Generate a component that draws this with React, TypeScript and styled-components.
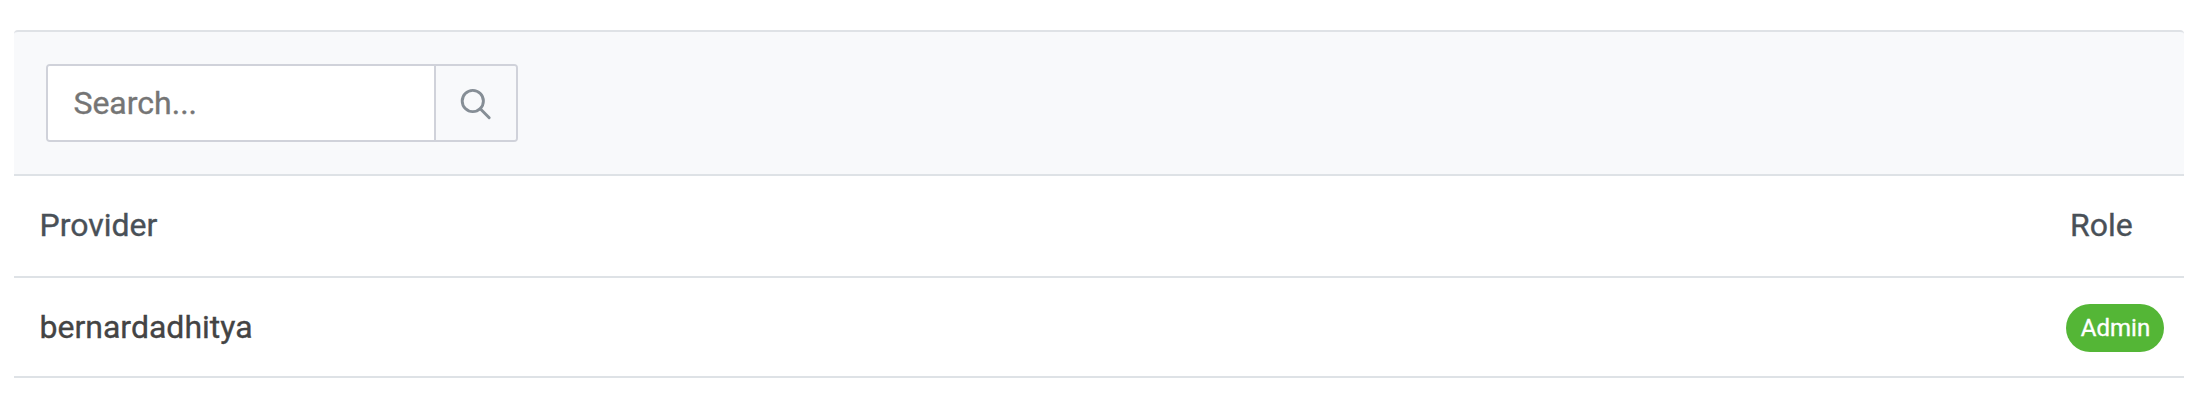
import React from "react";
import styled, { createGlobalStyle } from "styled-components";

const GlobalStyle = createGlobalStyle`
  body { margin: 0; background: #fff; font-family: Roboto, sans-serif; }
  * { box-sizing: border-box; }
`;
const Page = styled.main`
  width: 2206px; height: 400px; padding: 30px 22px 0 14px; background: #fff;
  -webkit-text-stroke: 0.35px currentColor;
`;
const Toolbar = styled.div`
  height: 146px; padding: 32px; background: #f8f9fb;
  border-top: 2px solid #dfe2e6; border-bottom: 2px solid #dee2e6;
  border-radius: 4px 4px 0 0;
`;
const SearchGroup = styled.div`
  display: flex; width: 472px; height: 78px;
  border: 2px solid #d0d2da; border-radius: 4px; overflow: hidden;
`;
const SearchInput = styled.input`
  width: 386px; padding: 0 24px 0 25.4px; border: 0; outline: 0; background: #fff;
  font: 32px Roboto, sans-serif; color: #495057;
  &::placeholder { color: #757575; opacity: 1; }
`;
const SearchButton = styled.button`
  flex: 1; display: flex; align-items: center; justify-content: center;
  padding: 0; border: 0; border-left: 2px solid #d0d2da; background: #f8f9fb;
`;
const Row = styled.div<{ $height: number }>`
  display: flex; align-items: center; justify-content: space-between;
  height: ${(p) => p.$height}px; padding-left: 25.5px;
  border-bottom: 2px solid #dee2e6; font-size: 32px; color: #444;
`;
const HeaderRow = styled(Row)`
  padding-bottom: 2px; color: #495057;
`;
const RoleCell = styled.div<{ $width: number }>`
  width: ${(p) => p.$width}px;
`;
const Badge = styled.span`
  display: flex; align-items: center; justify-content: center;
  width: 98px; height: 48px; margin-top: 2px; padding-left: 1px; border-radius: 24px;
  background: #54b636; color: #fff; font-size: 24px;
`;

export default function App() {
  return (
    <Page>
      <GlobalStyle />
      <Toolbar>
        <SearchGroup>
          <SearchInput placeholder="Search..." />
          <SearchButton aria-label="Search">
            <svg width="34" height="34" viewBox="0 0 34 34" fill="none" stroke="#868e96" strokeWidth="2.9" strokeLinecap="round">
              <circle cx="13.8" cy="15" r="10.6" />
              <path d="M21.5 22.9 30.2 31.8" />
            </svg>
          </SearchButton>
        </SearchGroup>
      </Toolbar>
      <HeaderRow $height={102}><span>Provider</span><RoleCell $width={114}>Role</RoleCell></HeaderRow>
      <Row $height={100}><span>bernardadhitya</span><RoleCell $width={118}><Badge>Admin</Badge></RoleCell></Row>
    </Page>
  );
}
